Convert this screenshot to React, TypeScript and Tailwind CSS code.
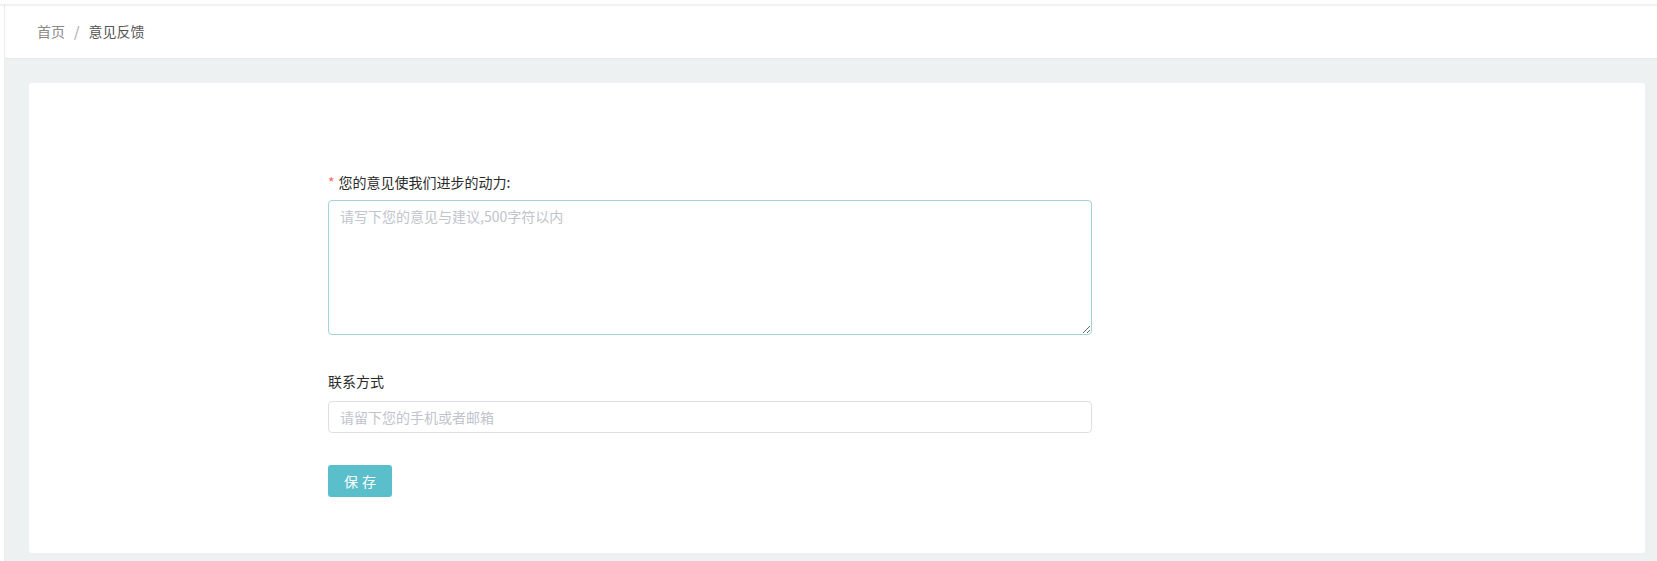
export default function App() {
  const font = { fontFamily: '"Noto Sans CJK SC", "Noto Sans", "Liberation Sans", sans-serif' };

  return (
    <div className="h-[561px] w-full flex flex-col bg-white overflow-hidden" style={font}>
      {/* 顶部细条 */}
      <div className="h-[5px] bg-white shadow-[0_1px_2px_rgba(0,0,0,0.06)] border-b border-[#f0f0f0] relative z-10" />

      <div className="flex flex-1 min-h-0">
        {/* 左侧细条 */}
        <div className="w-[5px] bg-white border-r border-[#ececec]" />

        <div className="flex-1 flex flex-col min-w-0">
          {/* 面包屑 */}
          <div className="h-[54px] bg-white border-b border-[#e4e6e8] flex items-center pl-[32px] text-[14px]">
            <span className="text-[#8a8a8a]">首页</span>
            <span className="mx-[9px] text-[#a0a0a0]">/</span>
            <span className="text-[#555]">意见反馈</span>
          </div>

          {/* 内容区 */}
          <div className="flex-1 bg-[#eef1f2] pt-[24px] pl-[24px] pr-[12px] pb-[8px] flex">
            <div className="flex-1 bg-white rounded-[3px] pt-[89px] pl-[299px]">
              <div className="w-[764px]">
                <div className="h-[20px] leading-[20px] text-[14px] text-[#2b2b2b] mb-[8px]">
                  <span className="text-[#f56c6c] mr-[4px]">*</span>
                  您的意见使我们进步的动力:
                </div>
                <textarea
                  className="block w-full h-[135px] border border-[#a3d3d6] rounded-[4px] px-[11px] py-[5px] text-[14px] leading-[21px] text-[#606266] placeholder:text-[#c0c4cc] outline-none"
                  placeholder="请写下您的意见与建议,500字符以内"
                />

                <div className="h-[20px] leading-[20px] text-[14px] text-[#2b2b2b] mt-[36px] mb-[10px]">联系方式</div>
                <input
                  className="block w-full h-[32px] border border-[#dcdfe6] rounded-[4px] px-[11px] text-[14px] text-[#606266] placeholder:text-[#c0c4cc] outline-none"
                  placeholder="请留下您的手机或者邮箱"
                />

                <button className="mt-[32px] w-[64px] h-[32px] rounded-[3px] bg-[#5bbecb] text-white text-[14px] tracking-[4px] pl-[4px]">
                  保存
                </button>
              </div>
            </div>
          </div>
        </div>
      </div>
    </div>
  );
}
